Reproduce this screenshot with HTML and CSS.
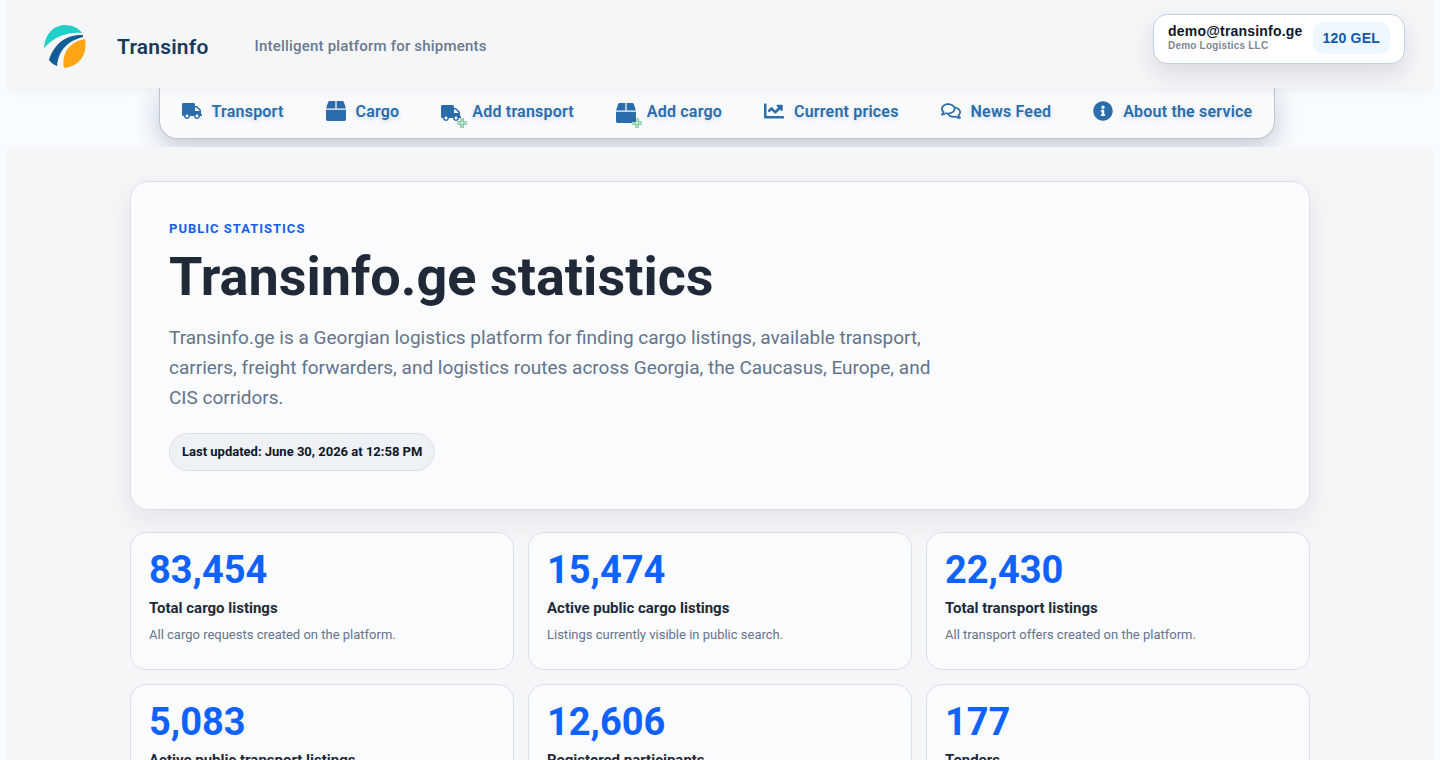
FILE: index.html
```html
<!DOCTYPE html>
<html lang="en">
<head>
    <meta charset="UTF-8">
    <meta name="viewport" content="width=device-width, initial-scale=1.0">
    <title>Transinfo.ge statistics</title>
    <link rel="stylesheet" href="styles.css">
</head>
<body>
    <!-- Icon set -->
    <svg class="sprite" aria-hidden="true">
        <symbol id="i-truck" viewBox="0 0 640 512"><path d="M624 352h-16V243.900c0-12.700-5.100-24.900-14.100-33.900L494 110.100c-9-9-21.200-14.100-33.900-14.100H416V48c0-26.500-21.500-48-48-48H48C21.500 0 0 21.500 0 48v320c0 26.500 21.500 48 48 48h16c0 53 43 96 96 96s96-43 96-96h128c0 53 43 96 96 96s96-43 96-96h48c8.800 0 16-7.200 16-16v-32c0-8.800-7.200-16-16-16zM160 464c-26.500 0-48-21.500-48-48s21.500-48 48-48 48 21.500 48 48-21.500 48-48 48zm320 0c-26.500 0-48-21.500-48-48s21.500-48 48-48 48 21.500 48 48-21.500 48-48 48zm80-208H416V144h44.100l99.900 99.900V256z"/></symbol>
        <symbol id="i-box" viewBox="0 0 512 512"><path d="M509.500 184.600L458.900 32.800C452.400 13.200 434.100 0 413.400 0H272v192h238.700c-.4-2.500-.4-5-1.200-7.400zM240 0H98.600c-20.700 0-39 13.200-45.500 32.800L2.500 184.600c-.8 2.400-.8 4.900-1.200 7.400H240V0zM0 224v240c0 26.500 21.500 48 48 48h416c26.500 0 48-21.500 48-48V224H0z"/></symbol>
        <symbol id="i-chart" viewBox="0 0 512 512"><path d="M496 384H64V80c0-8.840-7.160-16-16-16H16C7.160 64 0 71.160 0 80v336c0 17.670 14.330 32 32 32h464c8.840 0 16-7.160 16-16v-32c0-8.840-7.160-16-16-16zM464 96H345.940c-21.380 0-32.090 25.850-16.970 40.970l32.400 32.400L288 242.750l-73.370-73.370c-12.500-12.500-32.760-12.500-45.250 0l-68.690 68.690c-6.250 6.250-6.250 16.380 0 22.630l22.620 22.620c6.250 6.250 16.380 6.250 22.630 0L192 237.250l73.370 73.370c12.500 12.500 32.760 12.500 45.250 0l96-96 32.400 32.400c15.120 15.120 40.970 4.410 40.970-16.970V112c.01-8.840-7.150-16-15.990-16z"/></symbol>
        <symbol id="i-comments" viewBox="0 0 576 512"><path d="M532 386.200c27.500-27.100 44-61.100 44-98.200 0-80-76.500-146.100-176.200-157.900C368.300 72.500 294.300 32 208 32 93.100 32 0 103.600 0 192c0 37 16.500 71 44 98.200-15.300 30.700-37.300 54.500-37.700 54.900-6.300 6.700-8.100 16.500-4.400 25 3.600 8.500 12 14 21.200 14 53.500 0 96.700-20.200 125.200-38.800 9.200 2.100 18.700 3.700 28.400 4.900C208.100 407.600 281.800 448 368 448c20.800 0 40.800-2.400 59.800-6.800C456.300 459.700 499.400 480 553 480c9.200 0 17.500-5.500 21.200-14 3.600-8.500 1.900-18.300-4.400-25-.4-.3-22.500-24.100-37.800-54.800zm-392.800-92.300L122.100 305c-14.100 9.100-28.500 16.300-43.100 21.400 2.700-4.700 5.400-9.700 8-14.800l15.500-31.100L77.700 256C64.200 242.600 48 220.700 48 192c0-60.700 73.300-112 160-112s160 51.300 160 112-73.300 112-160 112c-16.500 0-33-1.900-49-5.600l-19.800-4.500zM498.300 352l-24.700 24.400 15.500 31.100c2.600 5.100 5.300 10.100 8 14.800-14.600-5.100-29-12.300-43.100-21.400l-17.100-11.100-19.900 4.600c-16 3.700-32.500 5.600-49 5.600-54 0-102.200-20.100-131.300-49.700C338 339.500 416 272.900 416 192c0-3.400-.4-6.700-.7-10C479.700 196.500 528 238.800 528 288c0 28.700-16.200 50.600-29.700 64z"/></symbol>
        <symbol id="i-info" viewBox="0 0 512 512"><path d="M256 8C119.043 8 8 119.083 8 256c0 136.997 111.043 248 248 248s248-111.003 248-248C504 119.083 392.957 8 256 8zm0 110c23.196 0 42 18.804 42 42s-18.804 42-42 42-42-18.804-42-42 18.804-42 42-42zm56 254c0 6.627-5.373 12-12 12h-88c-6.627 0-12-5.373-12-12v-24c0-6.627 5.373-12 12-12h12v-64h-12c-6.627 0-12-5.373-12-12v-24c0-6.627 5.373-12 12-12h64c6.627 0 12 5.373 12 12v100h12c6.627 0 12 5.373 12 12v24z"/></symbol>
        <symbol id="i-plus" viewBox="0 0 12 12"><path d="M6 1v10M1 6h10" fill="none" stroke="#2f8a5c" stroke-opacity=".85" stroke-width="3"/><path d="M6 1v10M1 6h10" fill="none" stroke="#c4f5da" stroke-width="1.400"/></symbol>
    </svg>

    <header class="header">
        <a href="#" class="logo" aria-label="Transinfo">
            <svg viewBox="0 0 42 43" width="42" height="43" aria-hidden="true">
                <path fill="#20cfc8" d="M0 23C1 9 10 0 21 0c7 0 14 3 17 8C24 7 11 11 0 23z"/>
                <path fill="#125d98" d="M39 10v2C24 16 15 24 13 41c-3-1-6-3-8-6C10 19 22 9 39 10z"/>
                <path fill="#ffa412" d="M41 14c3 17-7 28-21 29-3-14 5-26 21-29z"/>
            </svg>
        </a>
        <a href="#" class="brand">Transinfo</a>
        <p class="slogan">Intelligent platform for shipments</p>
        <div class="account">
            <div class="account-info">
                <strong class="account-email">demo@transinfo.ge</strong>
                <span class="account-company">Demo Logistics LLC</span>
            </div>
            <a href="#" class="balance">120 GEL</a>
        </div>
    </header>

    <div class="menu-row">
        <nav class="menu">
            <a href="#"><svg class="icon truck"><use href="#i-truck"/></svg>Transport</a>
            <a href="#"><svg class="icon"><use href="#i-box"/></svg>Cargo</a>
            <a href="#"><span class="icon-add"><svg class="icon truck"><use href="#i-truck"/></svg><svg class="plus"><use href="#i-plus"/></svg></span>Add transport</a>
            <a href="#"><span class="icon-add"><svg class="icon"><use href="#i-box"/></svg><svg class="plus"><use href="#i-plus"/></svg></span>Add cargo</a>
            <a href="#"><svg class="icon"><use href="#i-chart"/></svg>Current prices</a>
            <a href="#"><svg class="icon"><use href="#i-comments"/></svg>News Feed</a>
            <a href="#"><svg class="icon"><use href="#i-info"/></svg>About the service</a>
        </nav>
    </div>

    <main class="page">
        <div class="container">
            <section class="hero">
                <p class="kicker">Public statistics</p>
                <h1>Transinfo.ge statistics</h1>
                <p class="lead">Transinfo.ge is a Georgian logistics platform for finding cargo listings, available transport, carriers, freight forwarders, and logistics routes across Georgia, the Caucasus, Europe, and CIS corridors.</p>
                <p class="updated">Last updated: June 30, 2026 at 12:58 PM</p>
            </section>

            <section class="stats">
                <article class="stat">
                    <div class="stat-value">83,454</div>
                    <h2>Total cargo listings</h2>
                    <p>All cargo requests created on the platform.</p>
                </article>
                <article class="stat">
                    <div class="stat-value">15,474</div>
                    <h2>Active public cargo listings</h2>
                    <p>Listings currently visible in public search.</p>
                </article>
                <article class="stat">
                    <div class="stat-value">22,430</div>
                    <h2>Total transport listings</h2>
                    <p>All transport offers created on the platform.</p>
                </article>
                <article class="stat">
                    <div class="stat-value">5,083</div>
                    <h2>Active public transport listings</h2>
                </article>
                <article class="stat">
                    <div class="stat-value">12,606</div>
                    <h2>Registered participants</h2>
                </article>
                <article class="stat">
                    <div class="stat-value">177</div>
                    <h2>Tenders</h2>
                </article>
            </section>
        </div>
    </main>
</body>
</html>
```
FILE: styles.css
```css
* {
    box-sizing: border-box;
}

html {
    scrollbar-width: none;
}

body {
    margin: 0 7px;
    font-family: Roboto, sans-serif;
    background: #f8fbff;
    color: #1f2937;
}

h1, h2, p {
    margin: 0;
}

a {
    text-decoration: none;
}

.sprite {
    position: absolute;
    width: 0;
    height: 0;
}

/* Header */
.header {
    position: relative;
    z-index: 2;
    display: flex;
    align-items: center;
    height: 88px;
    padding: 0 28px 0 37px;
    letter-spacing: 0.2px;
    background: #f5f6f8;
    box-shadow: 0 2px 10px rgba(30, 41, 59, 0.06);
}

.logo {
    display: flex;
    padding-top: 5px;
    margin-right: 31px;
}

.brand {
    padding-top: 5px;
    margin-right: 46px;
    font-size: 21px;
    line-height: 24px;
    font-weight: 600;
    color: #163a5c;
}

.slogan {
    padding-top: 4px;
    font-size: 15px;
    line-height: 20px;
    font-weight: 500;
    color: #6b7a90;
}

.account {
    display: flex;
    align-items: center;
    gap: 10px;
    height: 50px;
    margin: 0 0 10px auto;
    padding: 0 14px 2px;
    font-family: "Liberation Sans", sans-serif;
    font-weight: 700;
    background: #fff;
    border: 1px solid #c3d0e2;
    border-radius: 14px;
    box-shadow: 0 10px 24px rgba(15, 23, 42, 0.12);
}

.account-info {
    display: flex;
    flex-direction: column;
}

.account-email {
    font-size: 14px;
    line-height: 16px;
    color: #0f172a;
}

.account-company {
    font-size: 10px;
    line-height: 14px;
    color: #7b8798;
}

.balance {
    padding: 6px 10px;
    font-size: 14px;
    line-height: 20px;
    color: #1259ad;
    background: #eef6ff;
    border-radius: 10px;
}

/* Main menu */
.menu-row {
    display: flex;
    justify-content: center;
    height: 59px;
    padding-right: 6px;
    overflow: hidden;
}

.menu {
    display: flex;
    align-items: center;
    gap: 42px;
    height: 51px;
    padding: 0 22px 2px;
    background: #f9fafc;
    border: 1px solid #bcc7d6;
    border-top: 0;
    border-radius: 0 0 18px 18px;
    box-shadow: 0 8px 24px rgba(30, 41, 80, 0.24);
}

.menu a {
    display: flex;
    align-items: center;
    gap: 10px;
    font-size: 16px;
    line-height: 20px;
    font-weight: 600;
    letter-spacing: 0.2px;
    color: #2b6cab;
    text-shadow: 0 2px 4px rgba(43, 108, 171, 0.2);
    white-space: nowrap;
}

.icon {
    display: block;
    width: 20px;
    height: 20px;
    margin-bottom: 2px;
    fill: #2b6cab;
}

.truck {
    height: 16px;
}

.icon-add {
    position: relative;
    padding: 4px 1px 0 0;
}

.plus {
    position: absolute;
    top: 50%;
    right: -6px;
    width: 12px;
    height: 12px;
    margin-top: 5px;
}

/* Content */
.page {
    padding: 34px 24px;
    background: #f5f6f8;
}

.container {
    max-width: 1180px;
    margin: 0 auto;
}

.hero {
    padding: 38px;
    background: #fafbfd;
    border: 1px solid #dae0ea;
    border-radius: 18px;
    box-shadow: 0 10px 28px rgba(15, 23, 42, 0.08);
}

.kicker {
    margin-bottom: 10px;
    font-size: 13px;
    line-height: 18px;
    font-weight: 700;
    letter-spacing: 1px;
    text-transform: uppercase;
    color: #155eef;
}

h1 {
    margin-bottom: 17px;
    font-size: 54px;
    line-height: 58px;
    font-weight: 700;
}

.lead {
    max-width: 780px;
    margin-bottom: 20px;
    font-size: 19px;
    line-height: 30px;
    color: #64748b;
}

.updated {
    display: inline-block;
    padding: 8px 12px;
    font-size: 13px;
    line-height: 20px;
    font-weight: 700;
    color: #0f172a;
    background: #eef1f6;
    border: 1px solid #dae0ea;
    border-radius: 20px;
}

/* Statistics cards */
.stats {
    display: grid;
    grid-template-columns: repeat(3, 1fr);
    gap: 14px;
    margin-top: 22px;
}

.stat {
    min-height: 138px;
    padding: 18px;
    background: #fafbfd;
    border: 1px solid #dae0ea;
    border-radius: 16px;
}

.stat-value {
    margin-bottom: 9px;
    font-size: 38px;
    line-height: 38px;
    font-weight: 700;
    color: #0f62fe;
}

.stat h2 {
    margin-bottom: 8px;
    font-size: 15px;
    line-height: 20px;
    font-weight: 700;
}

.stat p {
    font-size: 13px;
    line-height: 18px;
    color: #64748b;
}
```
